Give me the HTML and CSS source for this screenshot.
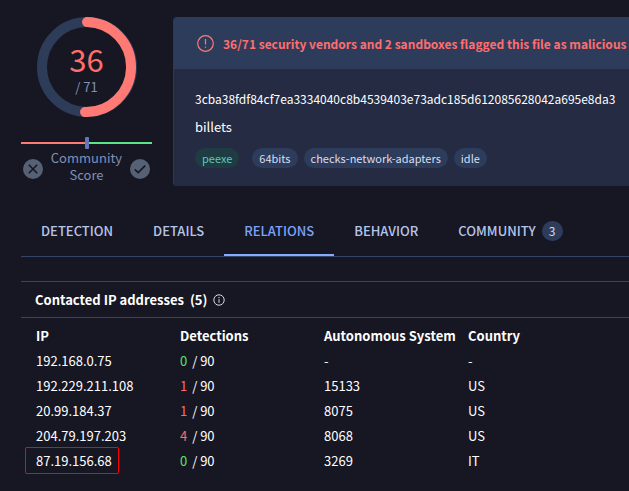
FILE: index.html
```html
<!DOCTYPE html>
<html lang="en">
<head>
<meta charset="utf-8">
<meta name="viewport" content="width=device-width, initial-scale=1">
<title>File report</title>
<link rel="stylesheet" href="styles.css">
</head>
<body>
<main class="page">
  <div class="summary">
    <aside class="score">
      <div class="gauge">
        <svg class="gauge-ring" viewBox="0 0 100 100" fill="none" stroke-width="10" aria-hidden="true">
          <circle cx="50" cy="50" r="45" stroke="#2d3c59"/>
          <path d="M50 5A45 45 0 1 1 48 95" stroke="#ff7975" stroke-linecap="round"/>
        </svg>
        <div class="gauge-text">
          <span class="gauge-value">36</span>
          <span class="gauge-total">/ 71</span>
        </div>
      </div>
      <div class="votes-bar"><span class="votes-mark"></span></div>
      <div class="community">
        <button class="vote" type="button" aria-label="Vote malicious">
          <svg viewBox="0 0 20 20" aria-hidden="true"><circle cx="10" cy="10" r="10" fill="#566176"/><path d="M5.8 5.8l8.4 8.4M14.2 5.8l-8.4 8.4" stroke="#171723" stroke-width="1.6" fill="none"/></svg>
        </button>
        <span class="community-label">Community Score</span>
        <button class="vote" type="button" aria-label="Vote harmless">
          <svg viewBox="0 0 20 20" aria-hidden="true"><circle cx="10" cy="10" r="10" fill="#566176"/><path d="M4.8 10.4l3.4 3.2 7-7" stroke="#171723" stroke-width="1.6" fill="none"/></svg>
        </button>
      </div>
    </aside>
    <section class="card">
      <div class="alert">
        <svg class="alert-icon" viewBox="0 0 17 17" fill="none" stroke="#ff7975" aria-hidden="true"><circle cx="8.5" cy="8.5" r="7.8" stroke-width="1.2"/><path d="M8.5 4v5.6M8.5 11.4v1.4" stroke-width="1.2"/></svg>
        <span>36/71 security vendors and 2 sandboxes flagged this file as malicious</span>
      </div>
      <div class="details">
        <div class="line hash">3cba38fdf84cf7ea3334040c8b4539403e73adc185d612085628042a695e8da3</div>
        <div class="line">billets</div>
        <div class="tags">
          <a class="tag tag-type" href="#">peexe</a>
          <a class="tag" href="#">64bits</a>
          <a class="tag" href="#">checks-network-adapters</a>
          <a class="tag" href="#">idle</a>
        </div>
      </div>
    </section>
  </div>

  <nav class="tabs">
    <a class="tab" href="#">DETECTION</a>
    <a class="tab" href="#">DETAILS</a>
    <a class="tab tab-active" href="#" aria-current="page">RELATIONS</a>
    <a class="tab" href="#">BEHAVIOR</a>
    <a class="tab" href="#">COMMUNITY <span class="count">3</span></a>
  </nav>

  <section class="relations">
    <h2 class="heading">
      <span>Contacted IP addresses</span><span>(5)</span>
      <svg class="info" viewBox="0 0 12 12" fill="none" stroke="#d5d9e4" aria-hidden="true"><circle cx="6" cy="6" r="5.2"/><path d="M6 5.2v3.6M6 3v1.2"/></svg>
    </h2>
    <table class="ips">
      <thead>
        <tr><th>IP</th><th>Detections</th><th>Autonomous System</th><th>Country</th></tr>
      </thead>
      <tbody>
        <tr><td>192.168.0.75</td><td><span class="clean">0</span> / 90</td><td>-</td><td>-</td></tr>
        <tr><td>192.229.211.108</td><td><span class="bad">1</span> / 90</td><td>15133</td><td>US</td></tr>
        <tr><td>20.99.184.37</td><td><span class="bad">1</span> / 90</td><td>8075</td><td>US</td></tr>
        <tr><td>204.79.197.203</td><td><span class="bad">4</span> / 90</td><td>8068</td><td>US</td></tr>
        <tr><td><span class="marked">87.19.156.68</span></td><td><span class="clean">0</span> / 90</td><td>3269</td><td>IT</td></tr>
      </tbody>
    </table>
  </section>
</main>
</body>
</html>
```

FILE: styles.css
```css
* { box-sizing: border-box; }

body {
  margin: 0;
  background: #171723;
  color: #fff;
  font: 13px/20px "Noto Sans CJK SC", "Noto Sans", sans-serif;
}

a { color: inherit; text-decoration: none; }

.page { padding: 17px 0 12px 21px; overflow: hidden; }

.summary { display: flex; gap: 21px; }

.score { flex: none; width: 131px; }

.gauge {
  display: grid;
  width: 100px;
  margin: 0 auto;
}
.gauge-ring, .gauge-text { grid-area: 1 / 1; }
.gauge-ring { display: block; width: 100px; height: 100px; }
.gauge-text {
  display: flex;
  flex-direction: column;
  align-items: center;
  justify-content: center;
  padding-top: 3px;
}
.gauge-value { color: #ff6e6a; font-size: 31px; line-height: 36px; }
.gauge-total { color: #8090b8; line-height: 20px; }

.votes-bar {
  display: flex;
  align-items: center;
  justify-content: center;
  height: 12px;
  margin-top: 20px;
  background: linear-gradient(90deg, #ff7975 50%, #5be587 50%) center / 100% 2px no-repeat;
}
.votes-mark { width: 4px; height: 12px; border-radius: 1px; background: #6079b5; }

.community {
  display: flex;
  align-items: center;
  justify-content: space-between;
  padding: 0 2px;
}
.community-label {
  flex: 1;
  color: #8090b8;
  line-height: 17px;
  text-align: center;
}
.vote {
  width: 20px;
  height: 20px;
  margin-top: 6px;
  padding: 0;
  border: 0;
  background: none;
}
.vote svg { display: block; }

.card {
  flex: 1;
  min-width: 0;
  overflow: hidden;
  border: 1px solid #2d3a54;
  border-width: 1px 0 0 1px;
  border-radius: 4px 0 0 4px;
  background: #242b42;
  white-space: nowrap;
}
.alert {
  display: flex;
  align-items: center;
  gap: 9px;
  height: 51px;
  padding-left: 23px;
  background: #2d3c5b;
  color: #ff6e6e;
  font-size: 12px;
  font-weight: 700;
}
.alert-icon { flex: none; width: 17px; height: 17px; }
.details { padding: 16px 0 18px 21px; }
.line { height: 28px; line-height: 28px; }
.hash { font-size: 12px; }
.tags { display: flex; gap: 6px; padding-top: 7px; }
.tag {
  padding: 0 7px;
  border-radius: 10px;
  background: #2d3c5b;
  color: #d8def0;
  font-size: 11px;
  line-height: 20px;
}
.tag-type { margin-right: 7px; background: #1e3c42; color: #5cc8c0; }

.tabs {
  display: flex;
  margin-top: 19px;
  border-bottom: 1px solid #364566;
}
.tab {
  display: flex;
  align-items: center;
  gap: 6px;
  height: 51px;
  padding: 2px 20px 0;
  border-bottom: 2px solid transparent;
  color: #b5c5ea;
  font-weight: 500;
}
.tab-active { border-color: #87a9ff; color: #7da2f7; }
.count {
  width: 21px;
  border-radius: 10px;
  background: #2d3c5b;
  color: #d5dcef;
  font-size: 12px;
  font-weight: 400;
  text-align: center;
}

.relations { margin-top: 24px; }
.heading {
  display: flex;
  align-items: center;
  gap: 6px;
  height: 37px;
  margin: 0;
  padding: 0 0 0 14px;
  border: 1px solid #364566;
  border-width: 1px 0;
  font-size: 13px;
  font-weight: 700;
}
.info { width: 12px; height: 12px; }

.ips {
  width: 100%;
  margin-top: 5px;
  margin-left: 15px;
  border-collapse: collapse;
  table-layout: fixed;
}
.ips th, .ips td {
  width: 144px;
  padding: 0;
  line-height: 25px;
  text-align: left;
  white-space: nowrap;
}
.ips th { font-weight: 700; }
.ips th:last-child { width: auto; }
.clean { margin-right: 2px; color: #5be56b; }
.bad { margin-right: 2px; color: #ff6b66; }
.marked {
  display: inline-block;
  margin-left: -10px;
  padding: 0 6px 0 10px;
  border-radius: 1px;
  box-shadow: 0 0 0 1px #f00;
  vertical-align: top;
}
```
